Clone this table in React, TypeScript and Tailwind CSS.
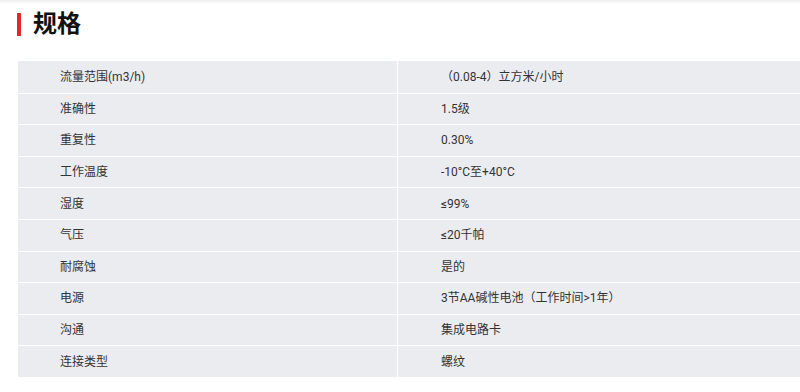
const SPECS: [string, string][] = [
  ['流量范围(m3/h)', '（0.08-4）立方米/小时'],
  ['准确性', '1.5级'],
  ['重复性', '0.30%'],
  ['工作温度', '-10°C至+40°C'],
  ['湿度', '≤99%'],
  ['气压', '≤20千帕'],
  ['耐腐蚀', '是的'],
  ['电源', '3节AA碱性电池（工作时间>1年）'],
  ['沟通', '集成电路卡'],
  ['连接类型', '螺纹'],
];

export default function App() {
  return (
    <div
      className="w-[800px] h-[392px] overflow-hidden bg-white relative"
      style={{ fontFamily: 'Roboto, "Noto Sans CJK SC", sans-serif' }}
    >
      {/* faint top shadow */}
      <div className="absolute top-0 left-0 right-0 h-[4px] bg-gradient-to-b from-[#eeeeee] to-white" />

      <div className="flex items-center pt-[10px] pl-[17px] h-[38px]">
        <div className="w-[4px] h-[23px] bg-[#e5262b] mt-[1px]" />
        <h2 className="ml-[12px] text-[24px] leading-[28px] font-bold text-[#111]">规格</h2>
      </div>

      <div className="ml-[18px] mt-[23px] w-[782px] bg-[#ebecf0]">
        {SPECS.map(([k, v], i) => (
          <div
            key={k}
            className={`flex h-[31.6px] text-[12px] text-[#333] ${i > 0 ? 'border-t border-white' : ''}`}
          >
            <div className="w-[380px] shrink-0 pl-[42px] flex items-center border-r border-white">
              {k}
            </div>
            <div className="flex-1 pl-[43px] flex items-center">{v}</div>
          </div>
        ))}
      </div>
    </div>
  );
}
